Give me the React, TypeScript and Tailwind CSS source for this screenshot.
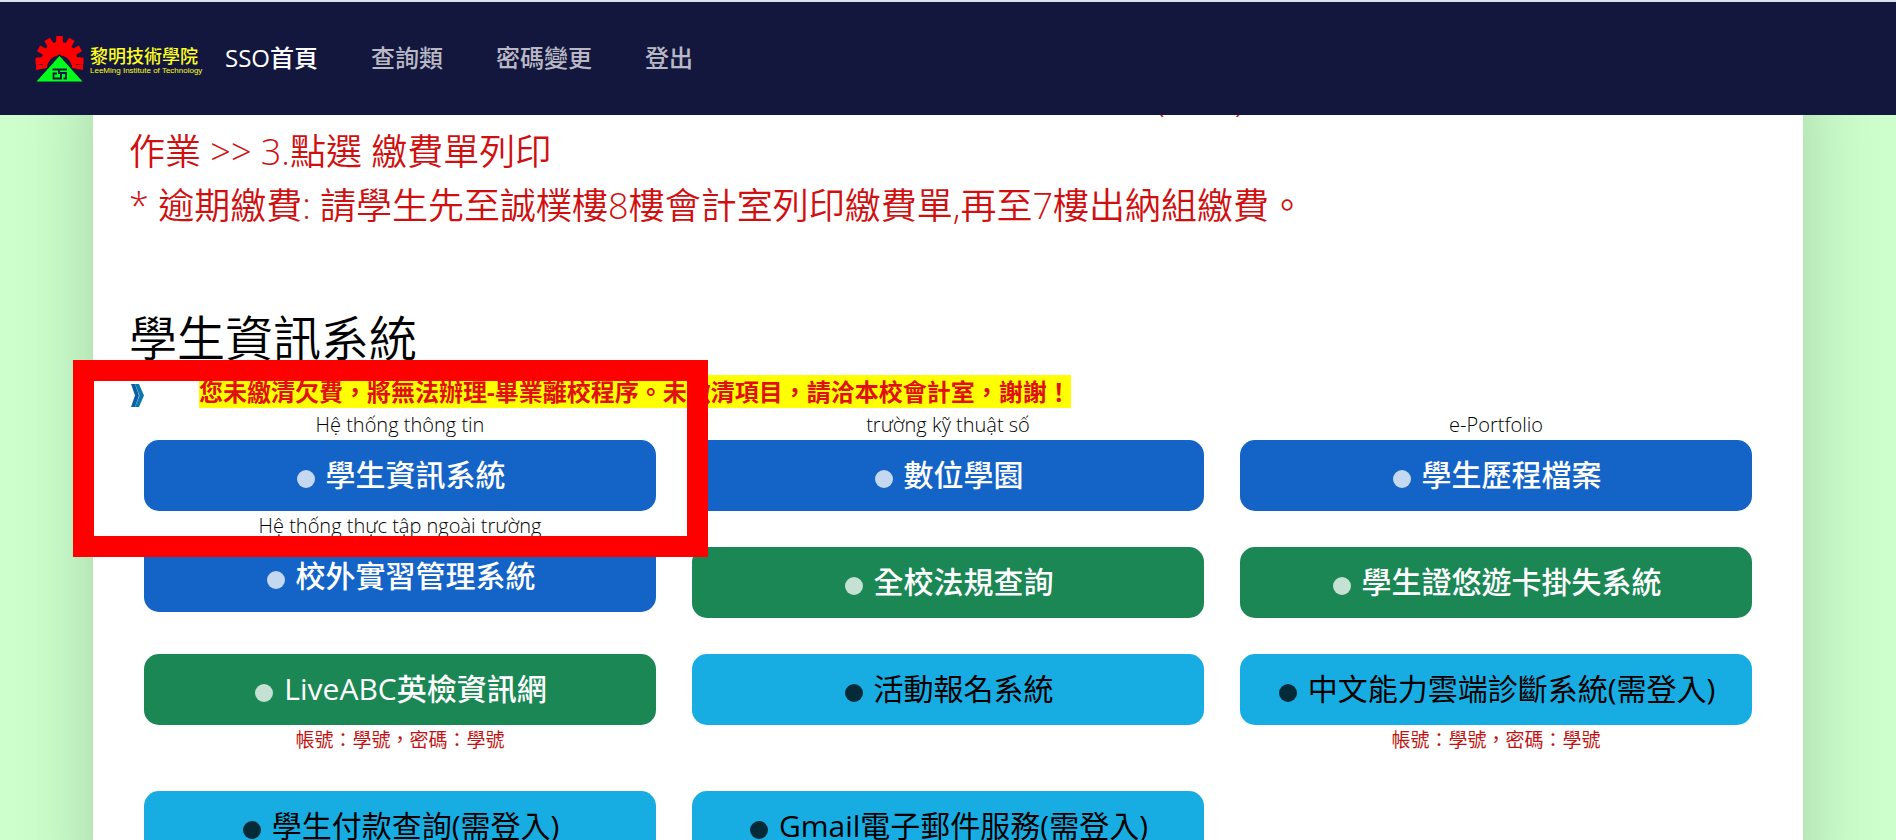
import React from 'react';

type Tone = 'blue' | 'green' | 'cyan';

interface SystemLink {
  label: string;
  tone: Tone;
  above?: string;
  below?: string;
}

const navItems = ['SSO首頁', '查詢類', '密碼變更', '登出'];

const systems: SystemLink[] = [
  { label: '學生資訊系統', tone: 'blue', above: 'Hệ thống thông tin' },
  { label: '數位學園', tone: 'blue', above: 'trường kỹ thuật số' },
  { label: '學生歷程檔案', tone: 'blue', above: 'e-Portfolio' },
  { label: '校外實習管理系統', tone: 'blue', above: 'Hệ thống thực tập ngoài trường' },
  { label: '全校法規查詢', tone: 'green' },
  { label: '學生證悠遊卡掛失系統', tone: 'green' },
  { label: 'LiveABC英檢資訊網', tone: 'green', below: '帳號：學號，密碼：學號' },
  { label: '活動報名系統', tone: 'cyan' },
  { label: '中文能力雲端診斷系統(需登入)', tone: 'cyan', below: '帳號：學號，密碼：學號' },
  { label: '學生付款查詢(需登入)', tone: 'cyan' },
  { label: 'Gmail電子郵件服務(需登入)', tone: 'cyan' },
];

const toneClass: Record<Tone, string> = {
  blue: 'bg-[#1463c7] text-white font-medium',
  green: 'bg-[#1a8754] text-white font-medium',
  cyan: 'bg-[#17ade3] text-black font-normal',
};

const gearTeeth = [-92, -61, -31, 0, 31, 61, 92];

const Logo: React.FC = () => (
  <a href="#" className="flex items-center gap-[6px]">
    <svg className="w-[49px] h-[46px]" viewBox="0 0 49 46">
      {/* 齒輪 */}
      <g fill="#ff0000">
        {gearTeeth.map((angle) => (
          <path key={angle} d="M21 8 L21.3 0 H27.7 L28 8 Z" transform={`rotate(${angle} 24.5 24)`} />
        ))}
      </g>
      <path d="M1 34 V28 L8 29 A17.5 17.5 0 1 1 41 29 L48 28 V34 L37 32 A12.5 12.5 0 1 0 12 32 Z" fill="#ff0000" />
      {/* 三角形 */}
      <path d="M24.5 18 L49 46 H0 Z" fill="#14173d" />
      <path d="M24.5 20 L47.5 45.5 H1.5 Z" fill="#00ff1a" />
      <path
        d="M17.5 33.5 H32 M24 33.5 V38 M22 37.5 H18.5 V42.5 H26 V37 H31 V42.5 H28.5"
        fill="none"
        stroke="#14173d"
        strokeWidth="1.8"
      />
    </svg>
    <span className="flex w-[110px] flex-col pt-1 whitespace-nowrap text-[#ffff1f]">
      <span className="text-[18px] leading-[20px] font-medium">黎明技術學院</span>
      <span className="font-['Liberation_Sans',sans-serif] text-[8px] leading-[10px]">
        LeeMing Institute of Technology
      </span>
    </span>
  </a>
);

const SystemCard: React.FC<{ item: SystemLink }> = ({ item }) => (
  <div className="flex flex-col text-center">
    {item.above ? (
      <p className="text-[20px] leading-[30px] font-light text-black">{item.above}</p>
    ) : (
      <div className="h-9" />
    )}
    <a
      href="#"
      className={`flex items-center justify-center gap-[11px] h-[71px] rounded-[15px] pb-[2px] pl-[2px] text-[30px] leading-[45px] whitespace-nowrap ${toneClass[item.tone]}`}
    >
      <span className="mt-[8px] size-[18px] rounded-full bg-current opacity-75"></span>
      {item.label}
    </a>
    {item.below && <p className="text-[19px] leading-[30px] text-[#c01414]">{item.below}</p>}
  </div>
);

export default function App() {
  return (
    <div className="relative h-screen overflow-hidden bg-[#ccffcc] font-['Open_Sans','Noto_Sans_CJK_TC',sans-serif]">
      <header className="relative z-10 flex items-center h-[115px] border-t-2 border-[#dcdff0] bg-[#14173d] pl-[35px]">
        <Logo />
        <nav className="ml-[25px] flex gap-[53px] pb-[2px] text-2xl font-medium">
          {navItems.map((item, i) => (
            <a key={item} href="#" className={i === 0 ? 'text-white' : 'text-[#b8b9c5]'}>
              {item}
            </a>
          ))}
        </nav>
      </header>

      {/* 內容從導覽列下方捲過 */}
      <main className="relative -mt-11 mx-[93px] min-h-screen bg-white px-9 shadow-[0_0_75px_rgba(0,0,0,0.2)]">
        <section className="text-4xl leading-[54px] font-[350] text-[#d01010]">
          <p className="flex gap-[70px] pl-[1026px]">
            <span>(</span>
            <span>)</span>
          </p>
          <p>作業 &gt;&gt; 3.點選 繳費單列印</p>
          <p>* 逾期繳費: 請學生先至誠樸樓8樓會計室列印繳費單,再至7樓出納組繳費。</p>
        </section>

        <section className="pt-[76px]">
          <h1 className="text-5xl leading-[58px] font-[350] text-black">學生資訊系統</h1>
          <p className="flex items-center h-[43px] pt-[6px] text-2xl font-bold">
            <svg className="w-[13px] h-[23px] mt-2 ml-[2px]" viewBox="0 0 13 23">
              <path d="M0 0 H4 L8 11.5 L4 23 H0 L4 11.5 Z" fill="#0b5fa5" />
              <path d="M4 0 H8 L13 11.5 L8 23 H4 L8.5 11.5 Z" fill="#0b78b0" />
            </svg>
            <mark className="ml-[55px] bg-[#ffff00] leading-[33px] text-[#e01010]">
              您未繳清欠費，將無法辦理-畢業離校程序。未繳清項目，請洽本校會計室，謝謝！
            </mark>
          </p>
          <div className="grid grid-cols-3 gap-x-9 px-[15px]">
            {systems.map((item) => (
              <SystemCard key={item.label} item={item} />
            ))}
          </div>
        </section>
      </main>

      {/* 標示框 */}
      <div className="pointer-events-none absolute left-[73px] top-[360px] z-20 h-[197px] w-[635px] border-[21px] border-[#ff0000]"></div>
    </div>
  );
}
